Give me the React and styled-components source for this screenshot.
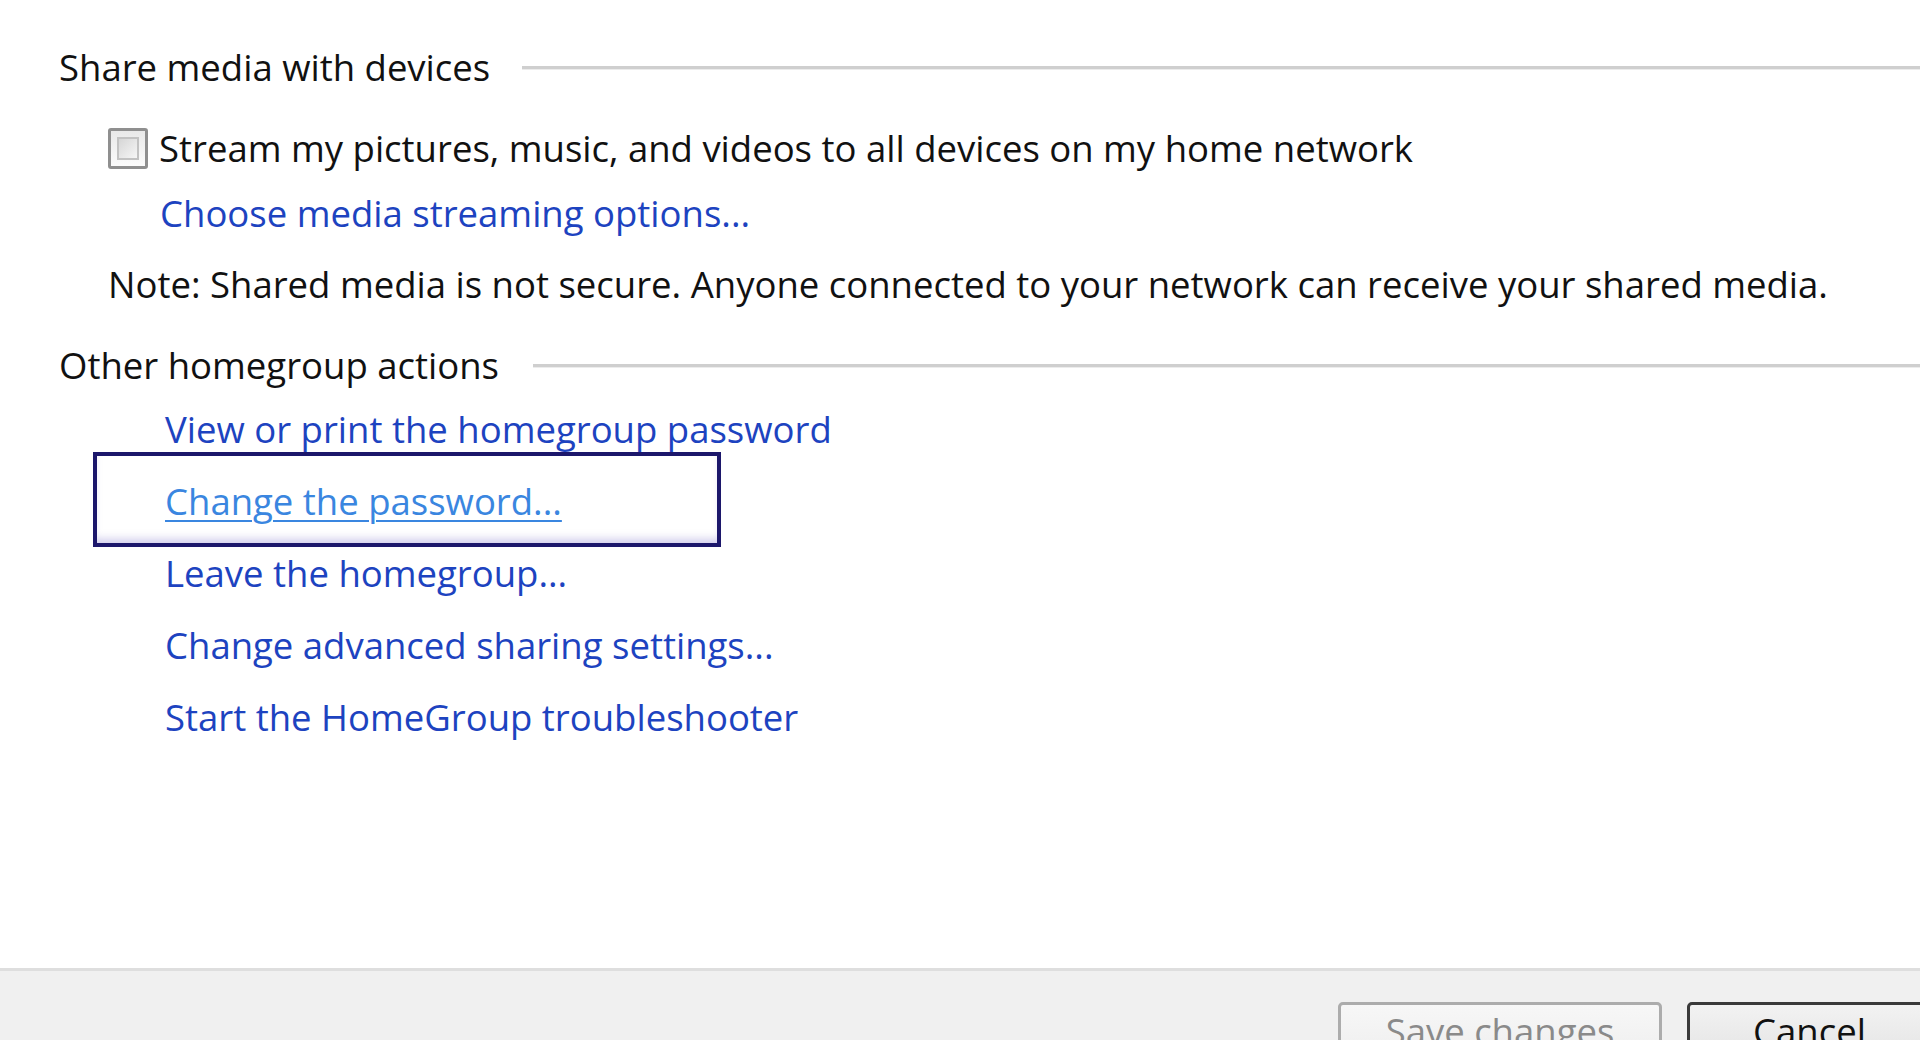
import React from 'react';
import styled, { createGlobalStyle } from 'styled-components';

const Global = createGlobalStyle`
  html, body { margin: 0; padding: 0; }
  body {
    width: 1920px;
    height: 1040px;
    overflow: hidden;
    background: #fff;
    font-family: "Open Sans", "Noto Sans", "Liberation Sans", sans-serif;
    color: #111;
  }
`;

const Window = styled.div`
  display: flex;
  flex-direction: column;
  height: 1040px;
`;

const Content = styled.div`
  flex: 1;
  padding: 42px 0 0 59px;
  font-size: 36.5px;
`;

const SectionHeading = styled.div`
  display: flex;
  align-items: center;
  gap: ${p => p.$gap || 32}px;
  height: 50px;
  margin-top: ${p => p.$top || 0}px;
  color: #111;
  white-space: nowrap;

  &::after {
    content: "";
    flex: 1;
    height: 3px;
    background: #cfcfcf;
    box-shadow: 0 1px 0 #ececec;
  }
`;

const Indent = styled.div`
  margin-left: ${p => p.$left}px;
  margin-top: ${p => p.$top || 0}px;
`;

const CheckRow = styled.label`
  display: flex;
  align-items: center;
  gap: 11px;
  height: 50px;
  white-space: nowrap;
`;

const CheckBox = styled.span`
  position: relative;
  box-sizing: border-box;
  width: 40px;
  height: 41px;
  border: 3px solid #8f8f8f;
  border-radius: 3px;
  background: linear-gradient(#e9e9e9, #fbfbfb);

  &::after {
    content: "";
    position: absolute;
    inset: 6px;
    border: 2px solid #c2c2c2;
    background: linear-gradient(135deg, #d6d6d6, #f6f6f6);
  }
`;

const Link = styled.a`
  display: inline-block;
  color: ${p => (p.$hot ? '#3a86e0' : '#1d43c0')};
  text-decoration: ${p => (p.$hot ? 'underline' : 'none')};
  text-underline-offset: 5px;
  text-decoration-thickness: 2px;
  white-space: nowrap;
  cursor: pointer;
`;

const LineRow = styled.div`
  height: 50px;
  line-height: 50px;
  white-space: nowrap;
`;

const ActionList = styled.ul`
  list-style: none;
  margin: 3px 0 0 106px;
  padding: 0;
`;

const ActionItem = styled.li`
  position: relative;
  height: 72px;
  line-height: 72px;

  ${p => p.$focused && `
    &::before {
      content: "";
      position: absolute;
      left: -72px;
      top: -13px;
      width: 628px;
      height: 95px;
      box-sizing: border-box;
      border: 4px solid #1c176b;
      box-shadow: inset 0 -8px 8px -4px rgba(120, 110, 200, 0.35);
      pointer-events: none;
    }
  `}
`;

const Footer = styled.div`
  height: 72px;
  box-sizing: border-box;
  border-top: 3px solid #dedede;
  background: #f0f0f0;
  display: flex;
  align-items: flex-start;
  gap: 25px;
  padding: 31px 0 0 1338px;
`;

const Button = styled.button`
  flex: none;
  width: ${p => p.$width}px;
  height: 70px;
  box-sizing: border-box;
  border: 3px solid ${p => (p.$default ? '#3a3a3a' : '#acacac')};
  border-radius: 5px;
  background: ${p => (p.$default
    ? 'linear-gradient(#f2f2f2, #e2e2e2)'
    : 'linear-gradient(#f7f7f7, #ededed)')};
  color: ${p => (p.disabled ? '#8a8a8a' : '#111')};
  font-family: inherit;
  font-size: 36.5px;
  line-height: 1;
  padding: 0 0 12px;
  text-align: center;
`;

const actions = [
  'View or print the homegroup password',
  'Change the password...',
  'Leave the homegroup...',
  'Change advanced sharing settings...',
  'Start the HomeGroup troubleshooter',
];

export default function App() {
  return (
    <Window>
      <Global />
      <Content>
        <SectionHeading>Share media with devices</SectionHeading>

        <Indent $left={49} $top={31}>
          <CheckRow>
            <CheckBox />
            Stream my pictures, music, and videos to all devices on my home network
          </CheckRow>
        </Indent>

        <Indent $left={101} $top={15}>
          <LineRow>
            <Link>Choose media streaming options...</Link>
          </LineRow>
        </Indent>

        <Indent $left={49} $top={21}>
          <LineRow>
            Note: Shared media is not secure. Anyone connected to your network can receive your shared media.
          </LineRow>
        </Indent>

        <SectionHeading $top={31} $gap={34}>Other homegroup actions</SectionHeading>

        <ActionList>
          {actions.map((a, i) => (
            <ActionItem key={a} $focused={i === 1}>
              <Link $hot={i === 1}>{a}</Link>
            </ActionItem>
          ))}
        </ActionList>
      </Content>

      <Footer>
        <Button disabled $width={324}>Save changes</Button>
        <Button $default $width={245}>Cancel</Button>
      </Footer>
    </Window>
  );
}
